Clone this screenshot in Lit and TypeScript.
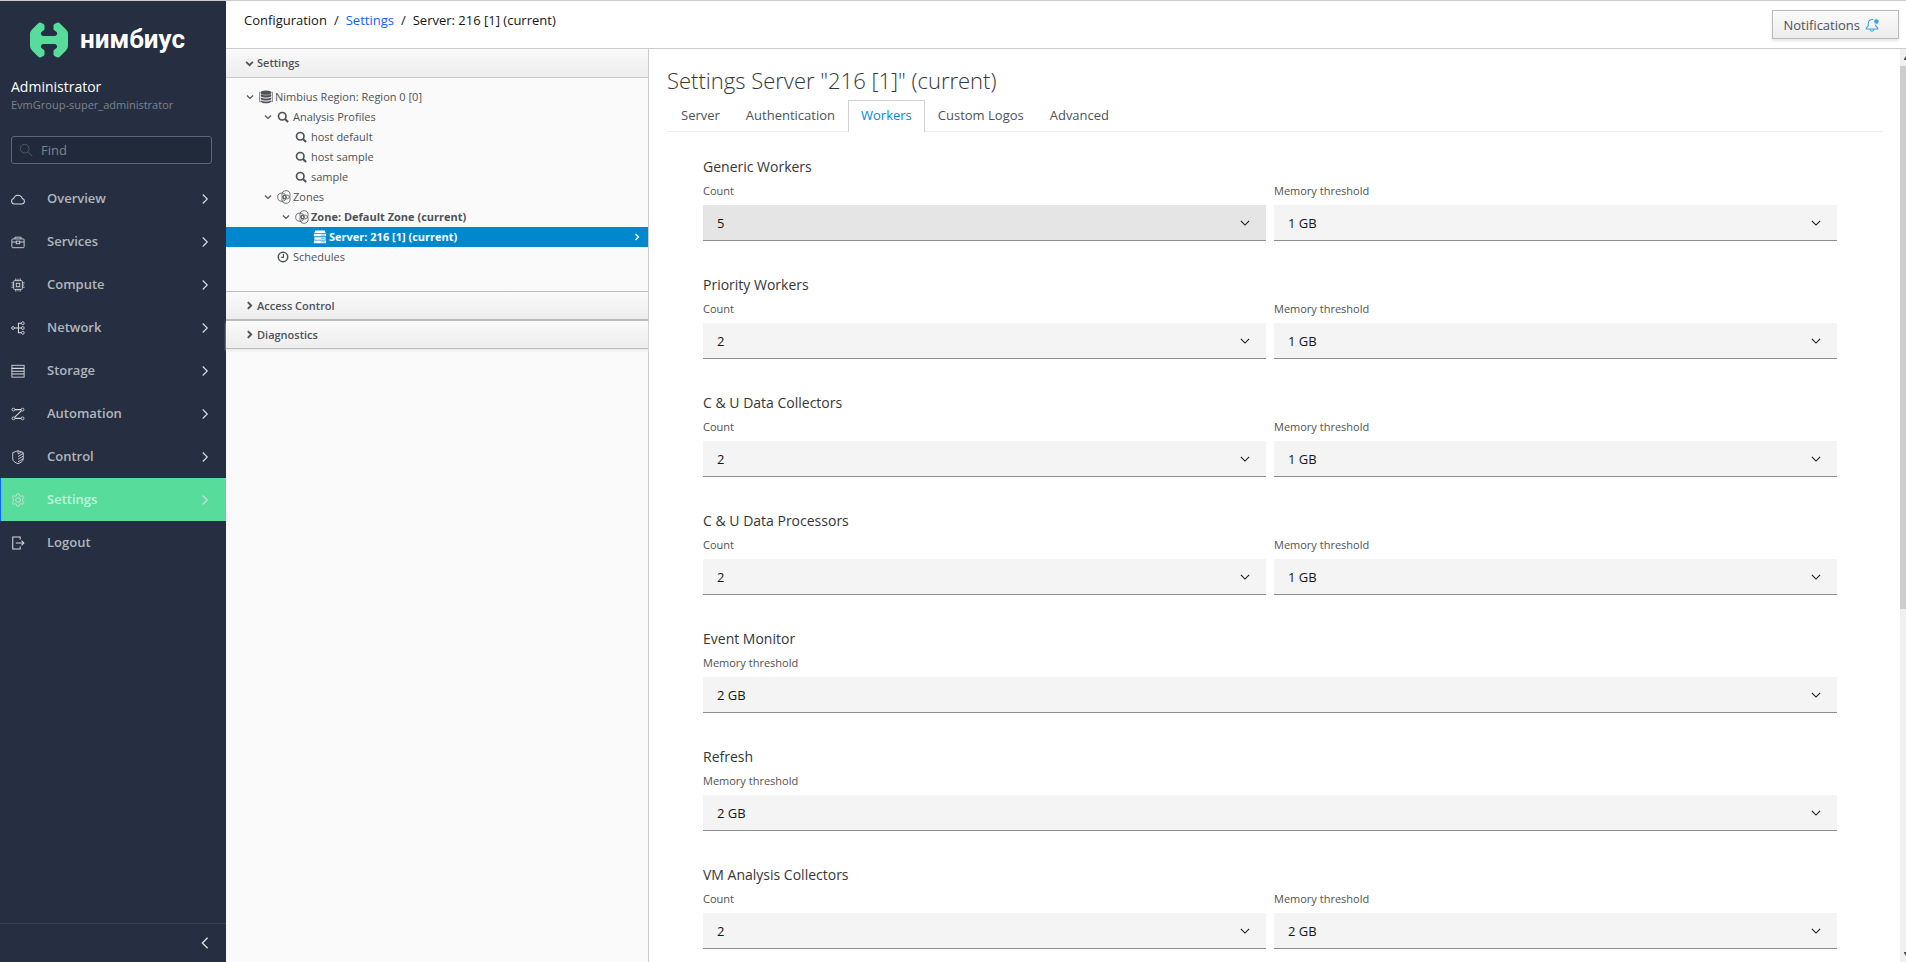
import { LitElement, html, css, svg, nothing, TemplateResult } from "lit";
import { customElement, property, state } from "lit/decorators.js";
import { classMap } from "lit/directives/class-map.js";

const stroke = (body: unknown) => html`<svg viewBox="0 0 16 16" fill="none" stroke="currentColor" stroke-width="1" aria-hidden="true">${body}</svg>`;

const icons: Record<string, TemplateResult> = {
  overview: stroke(svg`<path d="M3.800 13.800a3.300 3.300 0 0 1-.6-6.500 5 5 0 0 1 9.600 0 3.300 3.300 0 0 1-.6 6.500z" stroke-width="1.200"/>`),
  services: stroke(svg`<rect x="1" y="4.500" width="14" height="10" rx="1"/><path d="M4.500 4.500v-2h7v2M1 8h5M10 8h5"/><rect x="6" y="7" width="4" height="3"/>`),
  compute: stroke(svg`<rect x="3" y="3" width="10" height="10" rx="1"/><rect x="6" y="6" width="4" height="4"/><path d="M5.500 3V.5M10.500 3V.5M5.500 15.500V13M10.500 15.500V13M3 5.500H.5M3 10.500H.5M15.500 5.500H13M15.500 10.500H13M8 3V1M8 15v-2M3 8H1M15 8h-2"/>`),
  network: stroke(svg`<circle cx="2.300" cy="8" r="1.600"/><circle cx="13.500" cy="2.500" r="1.600"/><circle cx="13.500" cy="8" r="1.600"/><circle cx="13.500" cy="13.500" r="1.600"/><path d="M4 8h8M12 2.500H8.500v11H12" stroke-width="1.200"/>`),
  storage: stroke(svg`<rect x="1" y="1.500" width="14" height="13.500"/><path d="M1 5h14M1 8.200h14M1 11.500h14" stroke-width="1.200"/>`),
  automation: stroke(svg`<circle cx="2.800" cy="3" r="1.600"/><circle cx="13.200" cy="3" r="1.600"/><circle cx="2.800" cy="13" r="1.600"/><circle cx="13.200" cy="13" r="1.600"/><path d="M4.500 3h7M4.500 13h7M12 4.200 4 11.800" stroke-width="1.200"/>`),
  control: stroke(svg`<path d="M8 .8 14 3v7c0 3-3 4.500-6 5.600C5 14.500 2 13 2 10V3z"/><path d="M8 4.500l4-2M8 7.500l6-3.500M8 10.500l6-3.500M8 13.500l6-3.500M8 1v3"/>`),
  settings: stroke(svg`<circle cx="8" cy="8" r="2.700"/><path d="M6.700 1h2.600l.5 2 1.500.8 2-.7 1.300 2.300-1.500 1.500v2.200l1.500 1.500-1.300 2.300-2-.7-1.500.8-.5 2H6.700l-.5-2-1.500-.8-2 .7-1.300-2.300 1.500-1.500V6.900L1.400 5.400l1.300-2.300 2 .7L6.200 3z"/>`),
  logout: stroke(svg`<path d="M10.500 4V1.200H2v13.600h8.500V12M5.500 8h9M12 5.300 14.700 8 12 10.700" stroke-width="1.200"/>`),
  find: stroke(svg`<circle cx="6.500" cy="6.500" r="5"/><path d="M10.200 10.200l5 5"/>`),
  right: stroke(svg`<path d="M5 2l6 6-6 6" stroke-width="1.600"/>`),
  left: stroke(svg`<path d="M11 2 5 8l6 6" stroke-width="1.500"/>`),
  down: stroke(svg`<path d="M2.500 5.200 8 10.700l5.500-5.500" stroke-width="1.400"/>`),
  angleDown: stroke(svg`<path d="M2 5l6 6 6-6" stroke-width="2.200"/>`),
  angleRight: stroke(svg`<path d="M5 2l6 6-6 6" stroke-width="2.600"/>`),
  boldDown: stroke(svg`<path d="M2 5l6 6 6-6" stroke-width="3"/>`),
  boldRight: stroke(svg`<path d="M5 2l6 6-6 6" stroke-width="3.400"/>`),
  database: html`<svg viewBox="0 0 16 16" aria-hidden="true"><g fill="currentColor"><ellipse cx="8" cy="3" rx="6" ry="2.500"/><path d="M2 4.500c1.500 2 10.500 2 12 0v2.600c-1.500 2-10.500 2-12 0zM2 8.300c1.500 2 10.500 2 12 0v2.200c-1.500 2-10.500 2-12 0zM2 11.700c1.500 2 10.500 2 12 0V13c-1 3-11 3-12 0z"/></g><path d="M2 2.500H.6v11H2M14 2.500h1.400v11H14" fill="none" stroke="currentColor" stroke-width=".7"/></svg>`,
  search: stroke(svg`<circle cx="7" cy="7" r="5" stroke-width="2.200"/><path d="M10.500 10.500l4.300 4.300" stroke-width="2.800"/>`),
  zone: stroke(svg`<g stroke-width=".9"><circle cx="5.500" cy="8.200" r="4.700"/><circle cx="10.300" cy="5.500" r="4.700"/><circle cx="10.300" cy="10.500" r="4.700"/><path d="M7.500 5.800v4.800l3.800-2.400z"/></g>`),
  server: html`<svg viewBox="0 0 16 16" fill="currentColor" aria-hidden="true"><path d="M2.500 .5h11l1 3h-13zM1 4.400h14v2.800H1zM1.500 8.200h13v2.800H1.500zM1 12h14v3H1z"/><path d="M9 5.800h4.500M9 9.600h4.500M9 13.500h4.500" stroke="#0088ce" stroke-width=".7"/></svg>`,
  clock: stroke(svg`<circle cx="8" cy="8" r="6.300" stroke-width="2"/><path d="M8.500 4v4.500H5.500" stroke-width="1.500"/>`),
  bell: stroke(svg`<path d="M9.500 1.800C6 1 3.700 3.500 3.700 6.500V9L1.500 11.500v1h13v-1L12.300 9V7.500" stroke-width="1.200"/><path d="M5.800 12.800c0 3 4.400 3 4.400 0" stroke-width="1.200"/><circle cx="13" cy="4" r="2.600" fill="currentColor" stroke="none"/>`),
};

interface MenuItem { icon: string; label: string; leaf?: boolean; }

@customElement("nav-sidebar")
export class NavSidebar extends LitElement {
  @state() private active = "Settings";

  private items: MenuItem[] = [
    { icon: "overview", label: "Overview" },
    { icon: "services", label: "Services" },
    { icon: "compute", label: "Compute" },
    { icon: "network", label: "Network" },
    { icon: "storage", label: "Storage" },
    { icon: "automation", label: "Automation" },
    { icon: "control", label: "Control" },
    { icon: "settings", label: "Settings" },
    { icon: "logout", label: "Logout", leaf: true },
  ];

  static styles = css`
    :host { display: flex; flex-direction: column; background: #252f41; color: #fff; }
    svg { display: block; width: 14px; height: 14px; flex: none; }
    .brand { display: flex; align-items: center; gap: 12px; padding: 20px 30px 0; height: 38px; }
    .brand svg { width: 38px; height: 36px; }
    .word { font-family: Roboto, "Open Sans", sans-serif; font-size: 26px; line-height: 32px; font-weight: 700; padding-bottom: 2px; }
    .user { padding: 18px 11px 0; font-size: 14px; line-height: 20px; }
    .group { padding: 0 11px; font-size: 11px; line-height: 16px; color: #7c838e; }
    .find { display: flex; align-items: center; gap: 8px; margin: 23px 14px 13px 11px; padding: 0 7px; height: 26px; border: 1px solid #5f6774; border-radius: 3px; color: #555e6b; background: #212a3a; }
    .find input { flex: 1; min-width: 0; border: 0; outline: 0; padding: 0; background: none; color: #fff; font: 13px/20px "Open Sans", sans-serif; }
    .find input::placeholder { color: #7c838e; opacity: 1; }
    ul { list-style: none; margin: 0; padding: 0; flex: 1; }
    .item { display: flex; align-items: center; height: 43px; padding: 0 15px 0 11px; color: #b1b6bd; text-decoration: none; font-size: 13px; font-weight: 600; }
    .item svg { color: #d8dbdf; }
    .item .label { flex: 1; padding-left: 22px; line-height: 18px; padding-bottom: 2px; }
    .item .chevron svg { width: 12px; height: 12px; }
    .active { background: #58dc9b; border-left: 1px solid #0f62fe; padding-left: 10px; }
    .active .label { color: #c2f4dc; }
    .foot { border: 0; border-top: 1px solid #393f4c; background: none; height: 39px; padding: 0 14px; display: flex; justify-content: flex-end; align-items: center; color: #e0e2e6; }
  `;

  render() {
    return html`
      <div class="brand">
        <svg viewBox="0 0 38 36" aria-hidden="true"><path fill="#58dc9b" d="M0 12Q0 9.500 2 7.500L8 1.500Q9.500 0 11 .7L13.500 2Q14.500 2.600 14.500 4V7.500L11 10.500Q10.500 13 13 14H25Q27.500 13 27 10.500L23.500 7.500V4Q23.500 2.600 24.500 2L27 .7Q28.500 0 30 1.500L36 7.500Q38 9.500 38 12V24Q38 26.500 36 28.500L30 34.500Q28.500 36 27 35.300L24.500 34Q23.500 33.400 23.500 32V28.500L27 25.500Q27.500 23 25 22H13Q10.500 23 11 25.500L14.500 28.500V32Q14.500 33.400 13.500 34L11 35.300Q9.500 36 8 34.500L2 28.500Q0 26.500 0 24Z"/></svg>
        <span class="word">нимбиус</span>
      </div>
      <div class="user">Administrator</div>
      <div class="group">EvmGroup-super_administrator</div>
      <label class="find">${icons.find}<input type="search" placeholder="Find" aria-label="Find"></label>
      <ul>
        ${this.items.map(i => html`<li><a href="#" class=${classMap({ item: true, active: i.label === this.active })} @click=${(e: Event) => { e.preventDefault(); this.active = i.label; }}>
          ${icons[i.icon]}<span class="label">${i.label}</span>${i.leaf ? nothing : html`<span class="chevron">${icons.right}</span>`}</a></li>`)}
      </ul>
      <button class="foot" aria-label="Collapse menu">${icons.left}</button>
    `;
  }
}

interface TreeNode { level: number; icon: string; label: string; open?: boolean; bold?: boolean; selected?: boolean; }

@customElement("explorer-panel")
export class ExplorerPanel extends LitElement {
  private nodes: TreeNode[] = [
    { level: 0, icon: "database", label: "Nimbius Region: Region 0 [0]", open: true },
    { level: 1, icon: "search", label: "Analysis Profiles", open: true },
    { level: 2, icon: "search", label: "host default" },
    { level: 2, icon: "search", label: "host sample" },
    { level: 2, icon: "search", label: "sample" },
    { level: 1, icon: "zone", label: "Zones", open: true },
    { level: 2, icon: "zone", label: "Zone: Default Zone (current)", open: true, bold: true },
    { level: 3, icon: "server", label: "Server: 216 [1] (current)", bold: true, selected: true },
    { level: 1, icon: "clock", label: "Schedules" },
  ];

  static styles = css`
    :host { display: block; background: #fafafa; border-right: 1px solid #ccc; color: #4d5258; font-size: 11px; }
    svg { display: block; flex: none; }
    .head { display: flex; align-items: center; gap: 3px; width: 100%; height: 29px; padding: 0 19px; border: 0; background: linear-gradient(#fafafa, #ededed); font: 600 11px/16px "Open Sans", sans-serif; color: #4d5258; text-align: left; }
    .head svg { width: 9px; height: 9px; }
    .open { border-bottom: 1px solid #ccc; }
    .shut { border-top: 1px solid #bbb; border-bottom: 1px solid #bbb; }
    .last { box-shadow: 0 2px 2px #ececec; }
    .tree { list-style: none; margin: 0; padding: 9px 0 24px; }
    .row { display: flex; align-items: center; height: 20px; padding: 0 7px 0 20px; line-height: 20px; white-space: nowrap; }
    .l1 { padding-left: 38px; }
    .l2 { padding-left: 56px; }
    .l3 { padding-left: 74px; }
    .twist { width: 13px; flex: none; }
    .twist svg { width: 8px; height: 8px; }
    .glyph { width: 16px; flex: none; }
    .glyph svg { width: 12px; height: 12px; }
    .wide svg { width: 14px; height: 14px; }
    .bold { font-weight: 700; }
    .selected { background: #0088ce; color: #fff; }
    .name { flex: 1; }
    .more svg { width: 8px; height: 8px; }
  `;

  render() {
    return html`
      <button class="head open" aria-expanded="true">${icons.boldDown}Settings</button>
      <ul class="tree" role="tree">
        ${this.nodes.map(n => html`<li role="treeitem" class=${classMap({ row: true, ["l" + n.level]: true, bold: !!n.bold, selected: !!n.selected })}>
          <span class="twist">${n.open ? icons.angleDown : nothing}</span>
          <span class=${classMap({ glyph: true, wide: ["database", "zone", "server"].includes(n.icon) })}>${icons[n.icon]}</span>
          <span class="name">${n.label}</span>
          ${n.selected ? html`<span class="more">${icons.angleRight}</span>` : nothing}</li>`)}
      </ul>
      <button class="head shut" aria-expanded="false">${icons.boldRight}Access Control</button>
      <button class="head shut last" aria-expanded="false">${icons.boldRight}Diagnostics</button>
    `;
  }
}

@customElement("select-field")
export class SelectField extends LitElement {
  @property() label = "";
  @property() value = "";
  @property({ type: Boolean }) highlighted = false;

  static styles = css`
    :host { display: block; }
    label { display: block; font-size: 11px; line-height: 16px; color: #525252; margin-bottom: 6px; }
    .box { display: grid; align-items: center; }
    .box > * { grid-area: 1 / 1; }
    select { appearance: none; width: 100%; height: 36px; margin: 0; padding: 0 40px 0 14px; border: 0; border-bottom: 1px solid #8d8d8d; border-radius: 0; background: #f4f4f4; color: #161616; font: 13px/18px "Open Sans", sans-serif; }
    select:hover, .on { background: #e5e5e5; }
    svg { justify-self: end; width: 12px; height: 12px; margin-right: 15px; pointer-events: none; color: #161616; }
  `;

  render() {
    return html`<label for="s">${this.label}</label>
      <div class="box"><select id="s" class=${classMap({ on: this.highlighted })}><option>${this.value}</option></select>${icons.down}</div>`;
  }
}

interface WorkerGroup { title: string; count?: string; memory: string; }

@customElement("workers-form")
export class WorkersForm extends LitElement {
  private tabs = ["Server", "Authentication", "Workers", "Custom Logos", "Advanced"];

  private groups: WorkerGroup[] = [
    { title: "Generic Workers", count: "5", memory: "1 GB" },
    { title: "Priority Workers", count: "2", memory: "1 GB" },
    { title: "C & U Data Collectors", count: "2", memory: "1 GB" },
    { title: "C & U Data Processors", count: "2", memory: "1 GB" },
    { title: "Event Monitor", memory: "2 GB" },
    { title: "Refresh", memory: "2 GB" },
    { title: "VM Analysis Collectors", count: "2", memory: "2 GB" },
  ];

  static styles = css`
    :host { display: block; overflow: hidden; padding: 0 18px; color: #363636; }
    h1 { margin: 16px 0 5px; font-size: 22px; line-height: 30px; font-weight: 300; }
    .tabs { display: flex; border-bottom: 1px solid #ededed; padding-left: 1px; }
    .tab { font-size: 13px; line-height: 18px; padding: 5px 12px 7px; border: 1px solid transparent; border-bottom: 0; color: #4d5258; text-decoration: none; }
    .current { color: #0088ce; border-color: #d1d1d1; background: #fff; margin-bottom: -1px; }
    form { padding: 25px 45px 0 36px; display: grid; gap: 34px; }
    h2 { margin: 0 0 6px; font-size: 14px; line-height: 20px; font-weight: 400; }
    .pair { display: grid; grid-auto-flow: column; grid-auto-columns: minmax(0, 1fr); gap: 8px; }
  `;

  render() {
    return html`
      <h1>Settings Server "216 [1]" (current)</h1>
      <nav class="tabs">${this.tabs.map(t => html`<a href="#" class=${classMap({ tab: true, current: t === "Workers" })}>${t}</a>`)}</nav>
      <form>
        ${this.groups.map((g, i) => html`<section>
          <h2>${g.title}</h2>
          <div class="pair">
            ${g.count ? html`<select-field label="Count" value=${g.count} ?highlighted=${i === 0}></select-field>` : nothing}
            <select-field label="Memory threshold" value=${g.memory}></select-field>
          </div>
        </section>`)}
      </form>
    `;
  }
}

@customElement("app-root")
export class AppRoot extends LitElement {
  static styles = css`
    :host { display: grid; grid-template-columns: 226px minmax(0, 1fr); box-sizing: border-box; height: 100vh; overflow: hidden; border-top: 1px solid #ccc; background: #fff; font-family: "Open Sans", sans-serif; }
    .page { display: grid; grid-template-rows: 48px minmax(0, 1fr); min-width: 0; }
    .top { display: flex; justify-content: space-between; align-items: center; box-sizing: border-box; border-bottom: 1px solid #ccc; padding: 0 7px 0 18px; }
    .crumbs { display: flex; gap: 7px; font-size: 13px; line-height: 18px; color: #161616; padding-bottom: 9px; }
    .crumbs a { color: #0f62fe; text-decoration: none; }
    .note { display: flex; align-items: center; gap: 5px; height: 29px; padding: 0 19px 0 10px; border: 1px solid #bbb; background: linear-gradient(#fafafa, #ededed); box-shadow: 0 2px 3px rgba(3, 3, 3, 0.1); color: #4d5258; font: 13px/18px "Open Sans", sans-serif; }
    .note svg { width: 14px; height: 14px; color: #39a5dc; display: block; }
    .body { display: grid; grid-template-columns: 423px minmax(0, 1fr) 6px; min-height: 0; }
    .bar { display: flex; flex-direction: column; align-items: flex-end; background: #f0f0f0; overflow: hidden; }
    .bar svg { display: block; flex: none; width: 2px; height: 17px; }
    .thumb { width: 6px; flex: 543 1 0; background: #cdcdcd; }
    .track { flex: 336 1 0; }
  `;

  render() {
    return html`
      <nav-sidebar></nav-sidebar>
      <div class="page">
        <header class="top">
          <nav class="crumbs" aria-label="Breadcrumb"><span>Configuration</span><span>/</span><a href="#">Settings</a><span>/</span><span>Server: 216 [1] (current)</span></nav>
          <button class="note">Notifications ${icons.bell}</button>
        </header>
        <div class="body">
          <explorer-panel></explorer-panel>
          <workers-form></workers-form>
          <div class="bar" aria-hidden="true">
            <svg viewBox="0 0 2 17"><path d="M0 10 2 7v4H0z" fill="#505050"/></svg>
            <div class="thumb"></div><div class="track"></div>
            <svg viewBox="0 0 2 17"><path d="M0 7h2v4L0 8z" fill="#505050"/></svg>
          </div>
        </div>
      </div>
    `;
  }
}
